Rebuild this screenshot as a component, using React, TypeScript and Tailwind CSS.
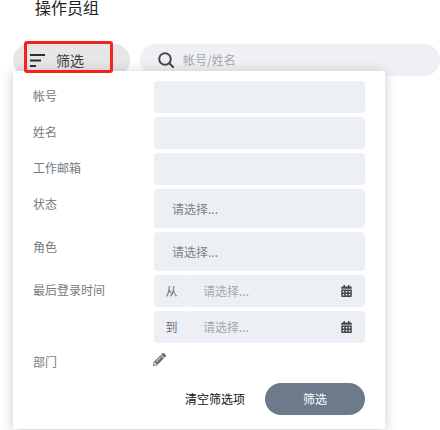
import { FaCalendarAlt, FaPencilAlt } from "react-icons/fa";

function Label({ children }: { children: string }) {
  return <div className="w-[121px] shrink-0 pt-[7px] text-[12px] leading-[16px] text-[#75797f]">{children}</div>;
}

function TextRow({ label }: { label: string }) {
  return (
    <div className="flex">
      <Label>{label}</Label>
      <div className="h-[32px] w-[211px] rounded-[4px] bg-[#eceff4]" />
    </div>
  );
}

function SelectRow({ label }: { label: string }) {
  return (
    <div className="flex">
      <Label>{label}</Label>
      <div className="flex h-[39px] w-[211px] items-center rounded-[4px] bg-[#eceff4] pl-[18px] text-[12px] text-[#7d8187]">
        请选择...
      </div>
    </div>
  );
}

function DateRow({ label, side }: { label: string; side: string }) {
  return (
    <div className="flex">
      <Label>{label}</Label>
      <div className="flex h-[32px] w-[211px] items-center rounded-[4px] bg-[#eceff4] text-[12px]">
        <div className="w-[35px] text-center leading-[32px] text-[#6b6f75]">{side}</div>
        <div className="h-full w-px border-y-[2px] border-white" />
        <div className="flex-1 pl-[13px] text-[#a5a8ad]">请选择...</div>
        <FaCalendarAlt className="mr-[13px] h-[12px] w-[11px] text-[#44474c]" />
      </div>
    </div>
  );
}

export default function App() {
  return (
    <div className="relative h-[430px] w-[440px] overflow-hidden bg-white [font-family:'Noto_Sans_CJK_SC','Liberation_Sans',sans-serif]">
      <div className="h-[44px] pl-[35px]">
        <span className="block text-[16px] leading-[15px] text-[#222]">操作员组</span>
      </div>

      <div className="flex items-start pl-[13px]">
        <div className="flex h-[32px] w-[117px] items-center rounded-full bg-[#e6e6e6] pl-[17px]">
          <svg width="15" height="13" viewBox="0 0 15 13" fill="#2b2e33">
            <rect x="0" y="0" width="15" height="2" />
            <rect x="0" y="5.5" width="11" height="2" />
            <rect x="0" y="11" width="6" height="2" />
          </svg>
          <span className="ml-[11px] text-[14px] leading-[30px] text-[#3a3d42]">筛选</span>
        </div>
        <div className="ml-[10px] flex h-[32px] w-[300px] items-center rounded-full bg-[#eff0f4] pl-[18px]">
          <svg width="16" height="16" viewBox="0 0 16 16" fill="none" stroke="#44474c" strokeWidth="2">
            <circle cx="7" cy="7" r="5.8" />
            <path d="M11.3 11.3 15.3 15.3" strokeLinecap="round" />
          </svg>
          <span className="ml-[9px] text-[12px] text-[#a3a6ab]">帐号/姓名</span>
        </div>
      </div>

      <div className="absolute left-[13px] top-[71px] h-[358px] w-[372px] bg-white pl-[20px] pt-[10px] shadow-[0_2px_12px_rgba(0,0,0,0.22)]">
        <div className="flex flex-col gap-[4px]">
          <TextRow label="帐号" />
          <TextRow label="姓名" />
          <TextRow label="工作邮箱" />
          <SelectRow label="状态" />
          <SelectRow label="角色" />
          <DateRow label="最后登录时间" side="从" />
          <DateRow label="" side="到" />
          <div className="flex h-[32px]">
            <Label>部门</Label>
            <FaPencilAlt className="-ml-px mt-[6px] h-[13px] w-[13px] text-[#6b6f75]" />
          </div>
        </div>
        <div className="mt-[4px] flex items-center">
          <div className="ml-[142px] w-[80px] text-center text-[12px] text-[#111]">清空筛选项</div>
          <div className="ml-[10px] h-[32px] w-[100px] rounded-full bg-[#6c7a8c] text-center text-[12px] leading-[32px] text-white">筛选</div>
        </div>
      </div>

      <div className="absolute left-[24px] top-[41px] h-[32px] w-[89px] rounded-[3px] border-[3px] border-[#f5211b]" />
    </div>
  );
}
